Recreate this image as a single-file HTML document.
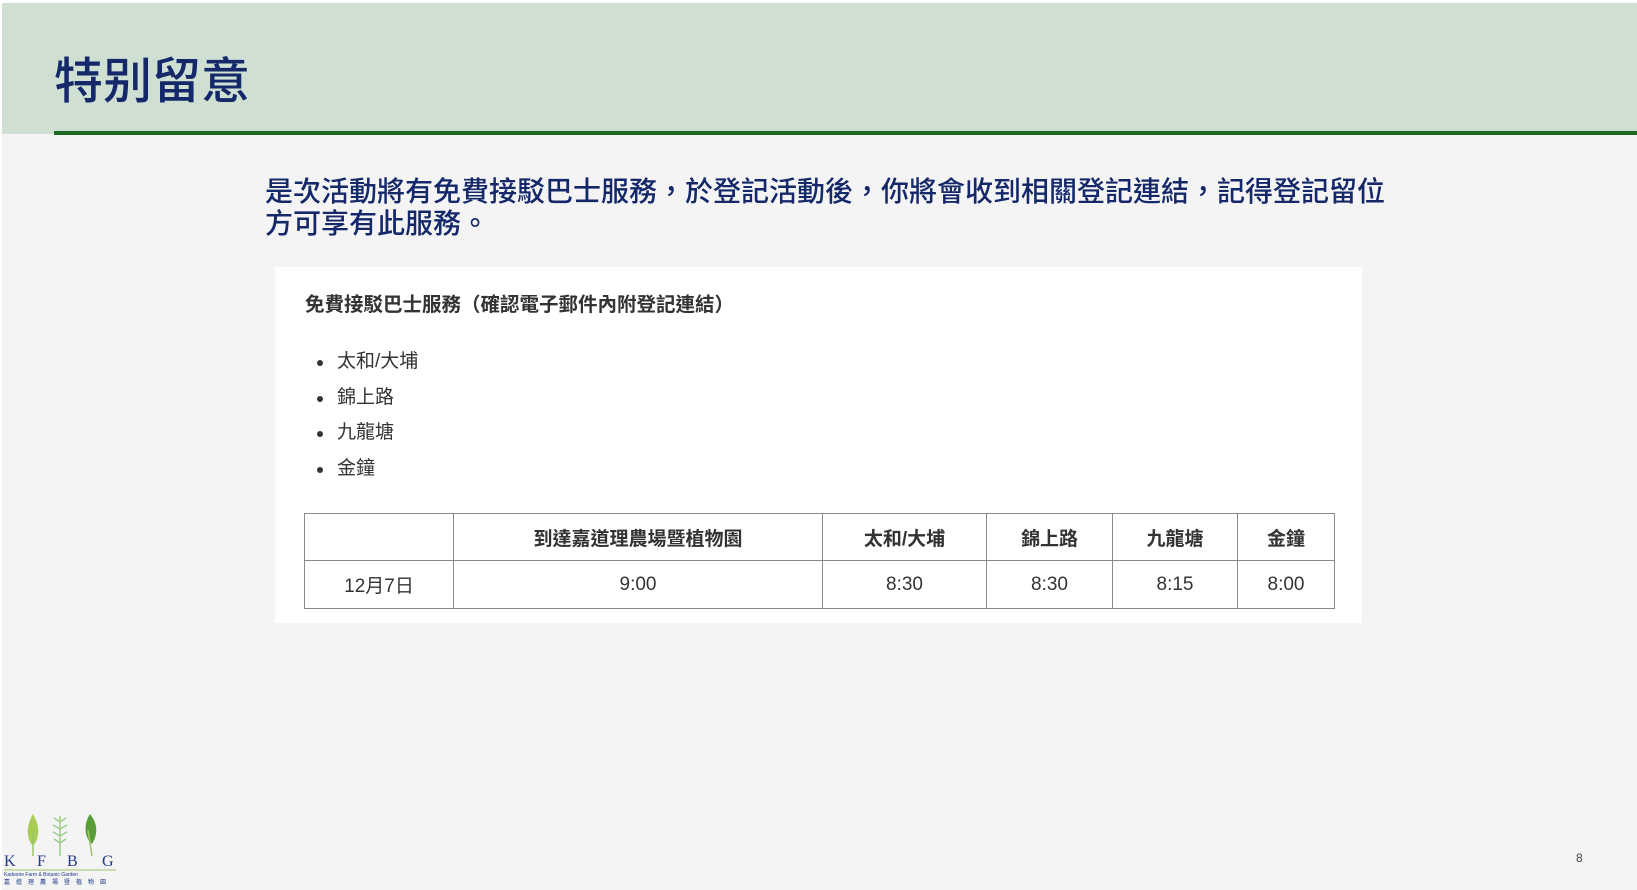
<!DOCTYPE html>
<html><head><meta charset="utf-8"><style>
*{margin:0;padding:0;box-sizing:border-box}
body{width:1637px;height:890px;background:#fff;position:relative;overflow:hidden;font-family:"Liberation Sans","Noto Sans CJK TC",sans-serif}
#bg{position:absolute;left:2px;top:3px;width:1635px;height:887px;background:#f4f4f4}
#hd{position:absolute;left:2px;top:3px;width:1635px;height:131px;background:#cfe0d3}
#rule{position:absolute;left:54px;top:131px;width:1583px;height:4px;background:#1c6a1f}
#title{position:absolute;left:54px;top:52px;font-size:49px;color:#14286a;line-height:60px;font-weight:500}
#para{position:absolute;left:265px;top:176px;width:1300px;font-size:28px;line-height:32px;color:#14286a;font-weight:500;white-space:nowrap}
#box{position:absolute;left:275px;top:267px;width:1087px;height:356px;background:#fff}
#h2{position:absolute;left:305px;top:292px;font-size:19.5px;font-weight:bold;color:#333;line-height:26px}
ul{position:absolute;left:337px;top:348px;list-style:none;font-size:19px;color:#333}
li{height:35.7px;line-height:28px;position:relative}
li:before{content:"";position:absolute;left:-20px;top:12px;width:6px;height:6px;border-radius:50%;background:#333}
table{position:absolute;left:304px;top:513px;border-collapse:collapse;font-size:19px;color:#333}
td{border:1.5px solid #8a8a8a;text-align:center;height:48px}
tr:first-child td{font-weight:bold;height:47px}
</style></head><body>
<div id="bg"></div><div id="hd"></div><div id="rule"></div>
<div id="title">特别留意</div>
<div id="para">是次活動將有免費接駁巴士服務，於登記活動後，你將會收到相關登記連結，記得登記留位<br>方可享有此服務。</div>
<div id="box"></div>
<div id="h2">免費接駁巴士服務（確認電子郵件內附登記連結）</div>
<ul><li>太和/大埔</li><li>錦上路</li><li>九龍塘</li><li>金鐘</li></ul>
<table>
<tr><td style="width:149px"></td><td style="width:369px">到達嘉道理農場暨植物園</td><td style="width:164px">太和/大埔</td><td style="width:126px">錦上路</td><td style="width:125px">九龍塘</td><td style="width:97px">金鐘</td></tr>
<tr><td>12月7日</td><td>9:00</td><td>8:30</td><td>8:30</td><td>8:15</td><td>8:00</td></tr>
</table>
<svg style="position:absolute;left:4px;top:812px" width="116" height="76" viewBox="0 0 116 76">
<path d="M29 2 C22 14 22 26 29 34 C36 26 36 14 29 2Z" fill="#a9cc55"/>
<path d="M29 20 L29 44" stroke="#9cc46a" stroke-width="1.5"/>
<g stroke="#9ccf8a" stroke-width="1.5" fill="none"><path d="M56 4 L56 44"/><path d="M56 10 l-6 -4 M56 10 l6 -4 M56 17 l-7 -4 M56 17 l7 -4 M56 24 l-7 -4 M56 24 l7 -4 M56 31 l-6 -4 M56 31 l6 -4"/></g>
<path d="M86 2 C78 14 82 28 88 32 C94 22 94 12 86 2Z" fill="#5a9e3a"/>
<path d="M84 18 L88 44" stroke="#9cc46a" stroke-width="1.5"/>
<text x="0" y="54" font-family="Liberation Serif,serif" font-size="16" fill="#1e3a8a">K</text>
<text x="33" y="54" font-family="Liberation Serif,serif" font-size="16" fill="#1e3a8a">F</text>
<text x="63" y="54" font-family="Liberation Serif,serif" font-size="16" fill="#1e3a8a">B</text>
<text x="98" y="54" font-family="Liberation Serif,serif" font-size="16" fill="#1e3a8a">G</text>
<line x1="0" y1="58" x2="112" y2="58" stroke="#9cc46a"/>
<text x="0" y="64" font-size="5" fill="#1e3a8a">Kadoorie Farm &amp; Botanic Garden</text>
<text x="0" y="72" font-size="6" fill="#1e3a8a" letter-spacing="6">嘉道理農場暨植物園</text>
</svg>
<div style="position:absolute;left:1576px;top:851px;font-size:12px;color:#444">8</div>
</body></html>
